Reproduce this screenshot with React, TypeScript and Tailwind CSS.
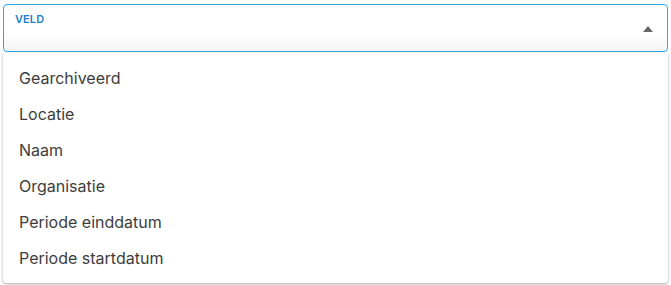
import React from 'react';

const options = [
  'Gearchiveerd',
  'Locatie',
  'Naam',
  'Organisatie',
  'Periode einddatum',
  'Periode startdatum',
];

export default function App() {
  return (
    <div className="w-[671px] h-[285px] bg-white px-[3px] pt-[4px] font-['Inter',sans-serif]">
      <div className="h-[48px] rounded-[4px] border border-[#29a9e1] bg-gradient-to-b from-white from-60% to-[#f4f4f4] flex items-start justify-between pl-[11px] pr-[14px]">
        <span className="mt-[6px] text-[11px] font-semibold tracking-[0.1px] text-[#1e80c6]">VELD</span>
        <svg width="10" height="6" viewBox="0 0 10 6" className="mt-[21px]">
          <path d="M0 6 L5 0 L10 6 Z" fill="#666" />
        </svg>
      </div>
      <ul className="mt-[1px] h-[230px] rounded-b-[4px] bg-white shadow-[0_1px_3px_rgba(0,0,0,0.35)] pt-[7px]">
        {options.map((o) => (
          <li key={o} className="h-[36px] flex items-center pl-[16px] text-[16px] text-[#3d3d3d]">
            {o}
          </li>
        ))}
      </ul>
    </div>
  );
}
